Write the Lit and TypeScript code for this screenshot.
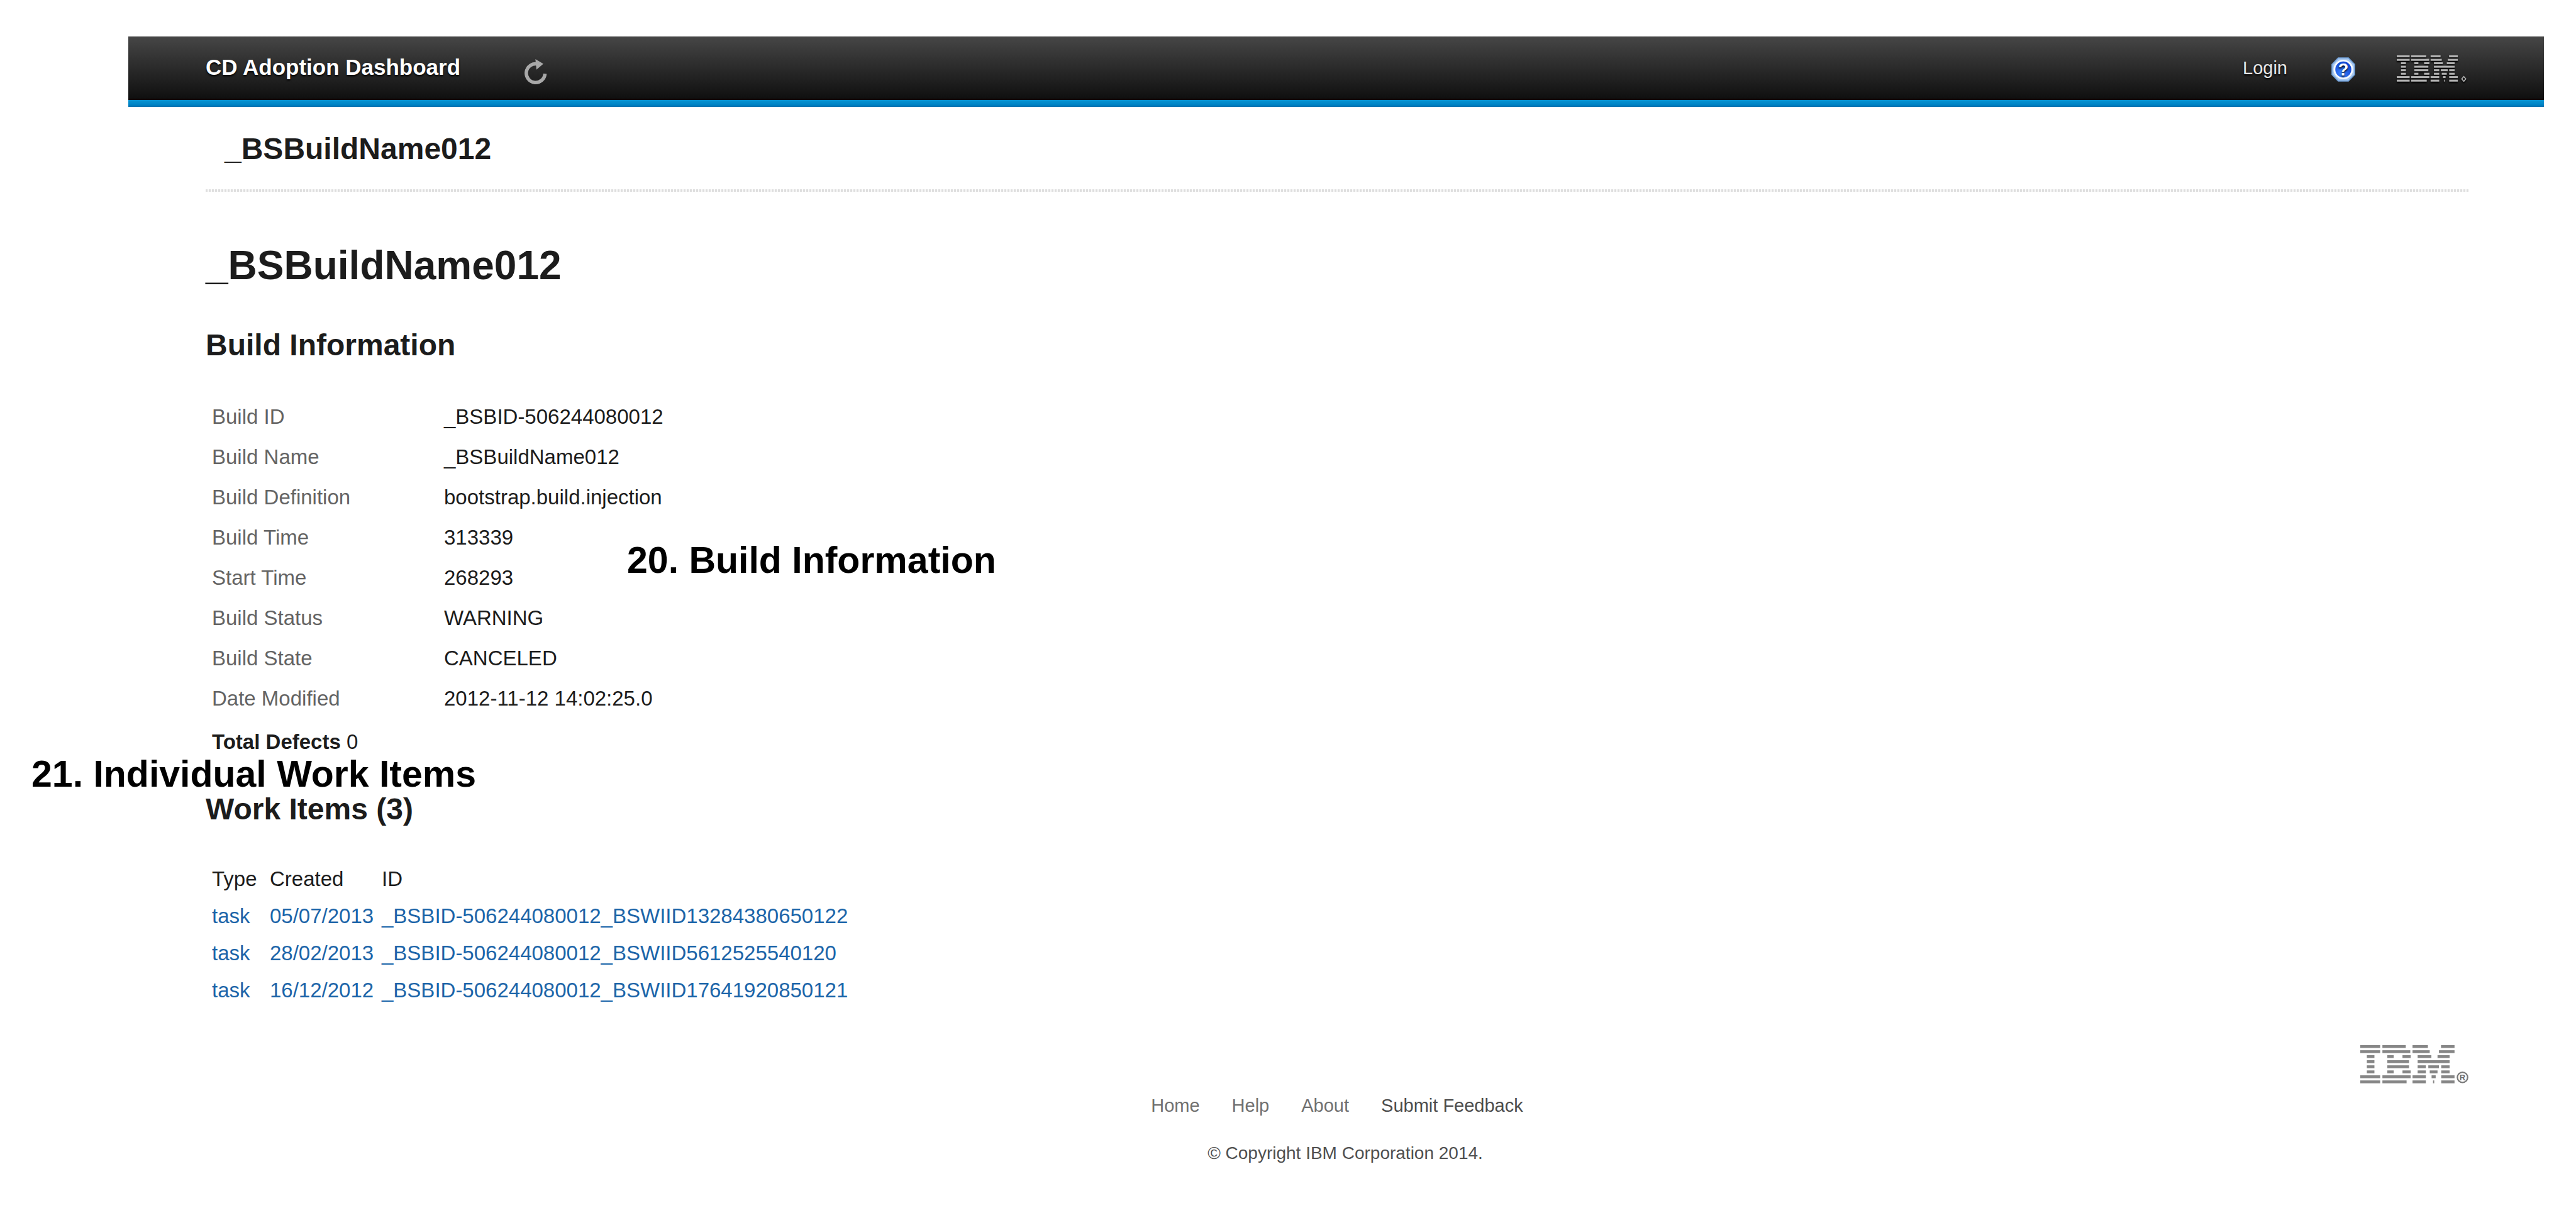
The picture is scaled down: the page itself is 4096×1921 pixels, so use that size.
import { LitElement, html, svg, css } from "lit";
import { customElement, property } from "lit/decorators.js";

type Bar = [number, number];

/* Horizontal runs of each of the eight stripes, in logo units. */
const STRIPES: Bar[][] = [
  [[0, 97], [108, 222], [255, 330], [394, 460]],
  [[0, 97], [108, 244], [255, 339], [384, 460]],
  [[32, 69], [132, 163], [206, 246], [280, 347], [377, 436]],
  [[32, 69], [132, 238], [280, 436]],
  [[32, 69], [132, 238], [280, 320], [332, 384], [395, 436]],
  [[32, 69], [132, 163], [206, 246], [280, 320], [339, 377], [395, 436]],
  [[0, 97], [108, 246], [255, 320], [348, 368], [395, 460]],
  [[0, 97], [108, 226], [255, 320], [355, 361], [395, 460]],
];

@customElement("ibm-logo")
export class IbmLogo extends LitElement {
  @property({ type: Boolean, reflect: true }) compact = false;

  static styles = css`
    :host { display: block; }
    .logo { display: block; width: 172px; height: 61px; fill: #868686; }
    .ring { fill: none; stroke: #787878; stroke-width: 7; }
    .mark { font: bold 40px "Liberation Sans", Arial, sans-serif; text-anchor: middle; fill: #6c6c6c; }
    :host([compact]) .logo {
      width: 111px;
      height: 42px;
      fill: #b0b0b0;
      filter: drop-shadow(0 2px 1px #000);
    }
    :host([compact]) .ring { stroke: #b0b0b0; stroke-width: 8; }
  `;

  render() {
    return html`
      <svg class="logo" viewBox=${this.compact ? "0 0 526 188" : "0 0 528 188"}
        preserveAspectRatio="none" role="img" aria-label="IBM">
        ${STRIPES.map((row, i) =>
          row.map(([a, b]) => svg`<rect x=${a} y=${Math.round(i * 24.7)} width=${b - a} height="14"></rect>`))}
        ${this.compact
          ? svg`<path class="ring" d="M505 151 L520 168 L505 185 L490 168 Z"></path>`
          : svg`<circle class="ring" cx="499" cy="158" r="25"></circle>
              <text class="mark" x="499" y="172">R</text>`}
      </svg>
    `;
  }
}

interface Field { label: string; value: string; }
interface WorkItem { type: string; created: string; id: string; }

@customElement("app-root")
export class AppRoot extends LitElement {
  private fields: Field[] = [
    { label: "Build ID", value: "_BSBID-506244080012" },
    { label: "Build Name", value: "_BSBuildName012" },
    { label: "Build Definition", value: "bootstrap.build.injection" },
    { label: "Build Time", value: "313339" },
    { label: "Start Time", value: "268293" },
    { label: "Build Status", value: "WARNING" },
    { label: "Build State", value: "CANCELED" },
    { label: "Date Modified", value: "2012-11-12 14:02:25.0" },
  ];

  private items: WorkItem[] = [
    { type: "task", created: "05/07/2013", id: "_BSBID-506244080012_BSWIID13284380650122" },
    { type: "task", created: "28/02/2013", id: "_BSBID-506244080012_BSWIID5612525540120" },
    { type: "task", created: "16/12/2012", id: "_BSBID-506244080012_BSWIID17641920850121" },
  ];

  static styles = css`
    :host {
      display: block;
      position: relative;
      box-sizing: border-box;
      min-height: 100vh;
      padding: 58px 51px 0 204px;
      background: #fff;
      color: #1c1c1c;
      font-family: "Liberation Sans", Arial, sans-serif;
      font-size: 33px;
    }
    a { color: inherit; text-decoration: none; }
    h1, h2, p, dl, dd { margin: 0; }

    .bar {
      display: flex;
      align-items: center;
      height: 101px;
      padding: 0 123px;
      background: linear-gradient(#464646, #101010 97%, #0c0300);
      color: #fff;
      text-shadow: 0 2px 3px #000;
    }
    .accent { height: 11px; background: linear-gradient(#0a93d0, #0086c8 60%, #0071b0); }
    .product { padding-bottom: 4px; font-size: 35px; font-weight: bold; }
    .refresh {
      margin-left: 102px;
      padding: 12px 0 0;
      border: 0;
      background: none;
      cursor: pointer;
    }
    .refresh-icon { display: block; width: 36px; height: 42px; }
    .tools { display: flex; align-items: center; margin-left: auto; }
    .login { margin-right: 70px; color: #e6e6e6; font-size: 29px; }
    .help { margin-right: 66px; padding-top: 4px; }
    .help-icon { display: block; width: 38px; height: 39px; }
    .help-mark { font: bold 84px "Liberation Sans", Arial, sans-serif; text-anchor: middle; }

    .content { padding: 0 120px 0 123px; }
    .crumb { padding: 37px 30px 34px; font-size: 48px; line-height: 60px; font-weight: bold; }
    .rule { height: 4px; background: repeating-linear-gradient(90deg, #dedede 0 3px, #fafafa 3px 5px); }
    .title { margin-top: 77px; font-size: 64px; line-height: 80px; }
    .section { margin-top: 57px; font-size: 48px; line-height: 60px; }
    .fields {
      display: grid;
      grid-template-columns: 369px 1fr;
      margin: 52px 0 0 10px;
      line-height: 64px;
    }
    .label { color: #646464; }
    .total { margin: 17px 0 0 10px; line-height: 40px; }

    .items { margin: 51px 0 0 10px; border-collapse: collapse; line-height: 59px; }
    .items th, .items td { padding: 0; text-align: left; font-weight: normal; white-space: nowrap; }
    .items th:nth-child(1) { width: 92px; }
    .items th:nth-child(2) { width: 178px; }
    .items td { color: #1c65a9; }

    .footer { padding: 58px 120px 0 123px; }
    .brand { display: flex; justify-content: flex-end; }
    .links {
      display: flex;
      justify-content: center;
      gap: 51px;
      margin-top: 15px;
      color: #707070;
      font-size: 29px;
      line-height: 40px;
    }
    .strong { color: #4c4c4c; }
    .copy {
      margin-top: 36px;
      padding-left: 26px;
      color: #505050;
      font-size: 28px;
      line-height: 40px;
      text-align: center;
    }

    .note {
      position: absolute;
      color: #000;
      font-size: 59px;
      line-height: 64px;
      font-weight: bold;
      white-space: nowrap;
    }
    .note-build { left: 997px; top: 859px; }
    .note-items { left: 50px; top: 1199px; }
  `;

  private refreshIcon() {
    return html`
      <svg class="refresh-icon" viewBox="0 0 110 130" aria-hidden="true">
        <path d="M62 24 A46 46 0 1 0 100 72" fill="none" stroke="#a8a8a8" stroke-width="17"></path>
        <path d="M53 0 L92 23 L58 52 Z" fill="#a8a8a8"></path>
      </svg>
    `;
  }

  private helpIcon() {
    return html`
      <svg class="help-icon" viewBox="0 0 118 120" aria-hidden="true">
        <defs>
          <radialGradient id="ball" cx="0.4" cy="0.7" r="0.7">
            <stop offset="0" stop-color="#3f86ff"></stop>
            <stop offset="1" stop-color="#0a3fd0"></stop>
          </radialGradient>
        </defs>
        <path d="M34 3 H84 L115 35 V85 L84 117 H34 L3 85 V35 Z" fill="#a9c8ee" stroke="#6f9fd8" stroke-width="5"></path>
        <circle cx="59" cy="60" r="44" fill="url(#ball)" stroke="#f4f9ff" stroke-width="9"></circle>
        <text class="help-mark" x="59" y="90" fill="#fff">?</text>
      </svg>
    `;
  }

  render() {
    return html`
      <header>
        <div class="bar">
          <span class="product">CD Adoption Dashboard</span>
          <button class="refresh" aria-label="Refresh">${this.refreshIcon()}</button>
          <nav class="tools">
            <a class="login" href="#login">Login</a>
            <a class="help" href="#help" aria-label="Help">${this.helpIcon()}</a>
            <ibm-logo compact></ibm-logo>
          </nav>
        </div>
        <div class="accent"></div>
      </header>

      <main class="content">
        <div class="crumb">_BSBuildName012</div>
        <div class="rule"></div>
        <h1 class="title">_BSBuildName012</h1>
        <h2 class="section">Build Information</h2>
        <dl class="fields">
          ${this.fields.map((f) => html`<dt class="label">${f.label}</dt><dd>${f.value}</dd>`)}
        </dl>
        <p class="total"><b>Total Defects</b> 0</p>
        <h2 class="section">Work Items (${this.items.length})</h2>
        <table class="items">
          <thead>
            <tr><th>Type</th><th>Created</th><th>ID</th></tr>
          </thead>
          <tbody>
            ${this.items.map((w) => html`
              <tr>
                <td><a href="#item">${w.type}</a></td>
                <td><a href="#item">${w.created}</a></td>
                <td><a href="#item">${w.id}</a></td>
              </tr>`)}
          </tbody>
        </table>
      </main>

      <footer class="footer">
        <div class="brand"><ibm-logo></ibm-logo></div>
        <nav class="links">
          <a href="#home">Home</a>
          <a href="#help">Help</a>
          <a href="#about">About</a>
          <a class="strong" href="#feedback">Submit Feedback</a>
        </nav>
        <p class="copy">© Copyright IBM Corporation 2014.</p>
      </footer>

      <div class="note note-build">20. Build Information</div>
      <div class="note note-items">21. Individual Work Items</div>
    `;
  }
}
